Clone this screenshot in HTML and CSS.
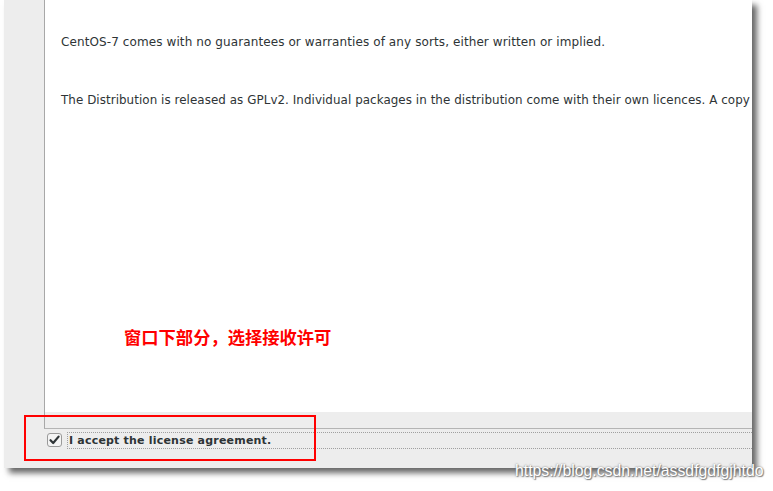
FILE: index.html
```html
<!DOCTYPE html>
<html>
<head>
<meta charset="utf-8">
<link rel="stylesheet" href="styles.css">
</head>
<body>
<div class="stage">
  <div class="window">
    <div class="main">
      <div class="side"></div>
      <div class="view">
        <p class="line first">CentOS-7 comes with no guarantees or warranties of any sorts, either written or implied.</p>
        <p class="line second">The Distribution is released as GPLv2. Individual packages in the distribution come with their own licences. A copy</p>
      </div>
    </div>
    <div class="accept">
      <span class="check">
        <svg width="15" height="14" viewBox="0 0 15 14"><rect x="0.5" y="0.5" width="14" height="13" rx="2.5" fill="#f4f4f4" stroke="#9a9a9a"/><path d="M3.5 7.2 L6.2 10 L11.6 3.6" fill="none" stroke="#2e3436" stroke-width="2.2" stroke-linecap="round" stroke-linejoin="round"/></svg>
      </span>
      <span class="label">I accept the license agreement.</span>
    </div>
  </div>
  <div class="note">窗口下部分，选择接收许可</div>
  <div class="redbox"></div>
  <div class="mark">https://blog.csdn.net/assdfgdfgjhtdo</div>
</div>
</body>
</html>
```
FILE: styles.css
```css
html, body {
  margin: 0;
  padding: 0;
  background: #ffffff;
}
.stage {
  position: relative;
  width: 773px;
  height: 491px;
  overflow: hidden;
  padding: 0 0 0 4px;
  box-sizing: border-box;
}
.window {
  width: 748px;
  height: 468px;
  background: #ededed;
  display: flex;
  flex-direction: column;
  box-shadow: 5px 5px 6px rgba(0, 0, 0, 0.6);
}
.main {
  display: flex;
  height: 429px;
}
.side {
  width: 40px;
  flex: none;
}
.view {
  flex: 1;
  border-left: 1px solid #a8a8a8;
  border-bottom: 1px solid #b4b4b4;
  background: linear-gradient(#ffffff, #ffffff) top / 100% 412px no-repeat, #ededed;
  overflow: hidden;
  padding-left: 16px;
}
.line {
  margin: 0;
  white-space: nowrap;
  font-family: "DejaVu Sans", sans-serif;
  font-size: 12px;
  line-height: 14px;
  letter-spacing: 0.1px;
  color: #2e3436;
}
.first {
  margin-top: 35px;
}
.second {
  margin-top: 44px;
  letter-spacing: 0.06px;
  font-size: 11.9px;
}
.accept {
  display: flex;
  align-items: center;
  padding: 1px 0 0 43px;
  height: 20px;
}
.check {
  display: flex;
  width: 15px;
  height: 14px;
  margin-right: 5px;
}
.label {
  flex: 1;
  height: 17px;
  border: 1px dotted #a0a0a0;
  border-right: none;
  box-sizing: border-box;
  display: flex;
  align-items: center;
  padding-left: 1px;
  font-family: "DejaVu Sans", sans-serif;
  font-weight: bold;
  font-size: 11px;
  color: #2e3436;
  letter-spacing: 0.2px;
}
.note {
  position: absolute;
  left: 124px;
  top: 327px;
  font-family: "Noto Sans CJK SC", sans-serif;
  font-weight: bold;
  font-size: 17.3px;
  line-height: 20px;
  color: #ff0000;
}
.redbox {
  position: absolute;
  left: 24px;
  top: 415px;
  width: 288px;
  height: 42px;
  border: 2px solid #ff0000;
}
.mark {
  position: absolute;
  left: 515px;
  top: 461px;
  font-family: "Liberation Sans", sans-serif;
  font-size: 15.8px;
  line-height: 20px;
  color: #ffffff;
  text-shadow: 0 0 2px #666, 1px 1px 1px #888;
}
```
